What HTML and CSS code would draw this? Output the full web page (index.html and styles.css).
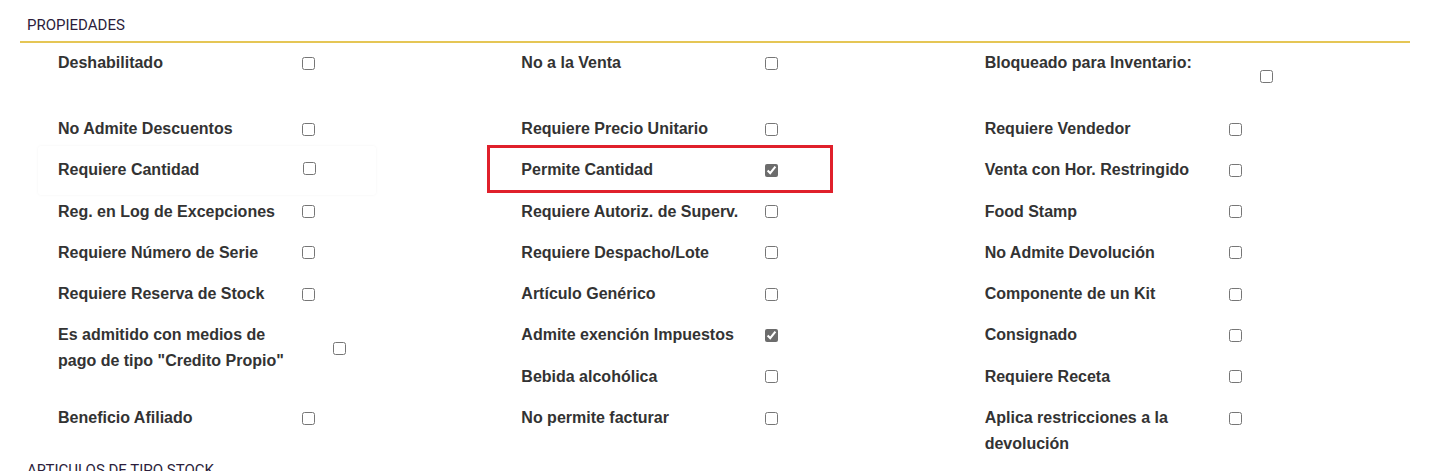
FILE: index.html
```html
<!DOCTYPE html>
<html lang="es">
<head>
<meta charset="utf-8">
<title>Propiedades</title>
<link rel="stylesheet" href="styles.css">
</head>
<body>
<section class="section">
  <h2 class="section-title">PROPIEDADES</h2>
  <div class="props">
    <div class="prop"><span class="prop-label">Deshabilitado</span><input type="checkbox" class="prop-check"></div>
    <div class="prop"><span class="prop-label">No a la Venta</span><input type="checkbox" class="prop-check"></div>
    <div class="prop prop--wide"><span class="prop-label">Bloqueado para Inventario:</span><input type="checkbox" class="prop-check"></div>

    <div class="prop"><span class="prop-label">No Admite Descuentos</span><input type="checkbox" class="prop-check"></div>
    <div class="prop"><span class="prop-label">Requiere Precio Unitario</span><input type="checkbox" class="prop-check"></div>
    <div class="prop"><span class="prop-label">Requiere Vendedor</span><input type="checkbox" class="prop-check"></div>

    <div class="prop prop--framed"><span class="prop-label">Requiere Cantidad</span><input type="checkbox" class="prop-check"></div>
    <div class="prop prop--highlight"><span class="prop-label">Permite Cantidad</span><input type="checkbox" class="prop-check" checked></div>
    <div class="prop"><span class="prop-label">Venta con Hor. Restringido</span><input type="checkbox" class="prop-check"></div>

    <div class="prop"><span class="prop-label">Reg. en Log de Excepciones</span><input type="checkbox" class="prop-check"></div>
    <div class="prop"><span class="prop-label">Requiere Autoriz. de Superv.</span><input type="checkbox" class="prop-check"></div>
    <div class="prop"><span class="prop-label">Food Stamp</span><input type="checkbox" class="prop-check"></div>

    <div class="prop"><span class="prop-label">Requiere Número de Serie</span><input type="checkbox" class="prop-check"></div>
    <div class="prop"><span class="prop-label">Requiere Despacho/Lote</span><input type="checkbox" class="prop-check"></div>
    <div class="prop"><span class="prop-label">No Admite Devolución</span><input type="checkbox" class="prop-check"></div>

    <div class="prop"><span class="prop-label">Requiere Reserva de Stock</span><input type="checkbox" class="prop-check"></div>
    <div class="prop"><span class="prop-label">Artículo Genérico</span><input type="checkbox" class="prop-check"></div>
    <div class="prop"><span class="prop-label">Componente de un Kit</span><input type="checkbox" class="prop-check"></div>

    <div class="prop prop--tall"><span class="prop-label">Es admitido con medios de pago de tipo "Credito Propio"</span><input type="checkbox" class="prop-check"></div>
    <div class="prop"><span class="prop-label">Admite exención Impuestos</span><input type="checkbox" class="prop-check" checked></div>
    <div class="prop"><span class="prop-label">Consignado</span><input type="checkbox" class="prop-check"></div>

    <div class="prop"><span class="prop-label">Bebida alcohólica</span><input type="checkbox" class="prop-check"></div>
    <div class="prop"><span class="prop-label">Requiere Receta</span><input type="checkbox" class="prop-check"></div>

    <div class="prop"><span class="prop-label">Beneficio Afiliado</span><input type="checkbox" class="prop-check"></div>
    <div class="prop"><span class="prop-label">No permite facturar</span><input type="checkbox" class="prop-check"></div>
    <div class="prop prop--wrap"><span class="prop-label">Aplica restricciones a la devolución</span><input type="checkbox" class="prop-check"></div>
  </div>
</section>
<section class="section">
  <h2 class="section-title section-title--next">ARTICULOS DE TIPO STOCK</h2>
</section>
</body>
</html>
```

FILE: styles.css
```css
html, body {
  margin: 0;
  padding: 0;
  background: #ffffff;
}

body {
  font-family: "Liberation Sans", Arial, sans-serif;
  color: #333333;
}

.section {
  margin: 0 31px 0 20px;
}

.section-title {
  margin: 0;
  padding: 15px 0 6px 7px;
  font-family: Roboto, "Liberation Sans", sans-serif;
  font-weight: 400;
  font-size: 15px;
  line-height: 20px;
  color: #2b1d3b;
  border-bottom: 2px solid #e5c655;
}

.section-title--next {
  padding-top: 3px;
  border-bottom: none;
}

.props {
  display: grid;
  grid-template-columns: repeat(3, 1fr);
  grid-template-rows: 66px;
  grid-auto-rows: minmax(41.3px, auto);
}

.prop {
  position: relative;
  display: flex;
  align-items: flex-start;
  padding: 7px 0 0 38px;
}

.prop-label {
  flex: none;
  width: 244px;
  font-weight: 700;
  font-size: 16px;
  line-height: 26px;
  color: #333333;
}

.prop-check {
  flex: none;
  width: 13px;
  height: 13px;
  margin: 6.5px 0 0 0;
  accent-color: #6c6c6c;
}

.prop--wide .prop-label {
  width: 275px;
}

.prop--wide .prop-check {
  margin-top: 20px;
}

.prop--tall {
  grid-row: span 2;
  align-self: start;
  align-items: center;
}

.prop--tall .prop-label {
  width: 240px;
  margin-right: 35px;
}

.prop--tall .prop-check {
  margin-top: 0;
}

.prop--wrap .prop-label {
  width: 230px;
  margin-right: 14px;
}

.prop--framed::before {
  content: "";
  position: absolute;
  left: 18px;
  top: -4px;
  width: 338px;
  height: 49px;
  border-radius: 3px;
  box-shadow: 0 0 3px rgba(0, 0, 0, 0.05);
  pointer-events: none;
}

.prop--framed .prop-check {
  margin-top: 4.5px;
  margin-left: 1px;
}

.prop--highlight::after {
  content: "";
  position: absolute;
  left: 4px;
  top: -5px;
  width: 340px;
  height: 42px;
  border: 3px solid #e0202b;
  pointer-events: none;
}
```
